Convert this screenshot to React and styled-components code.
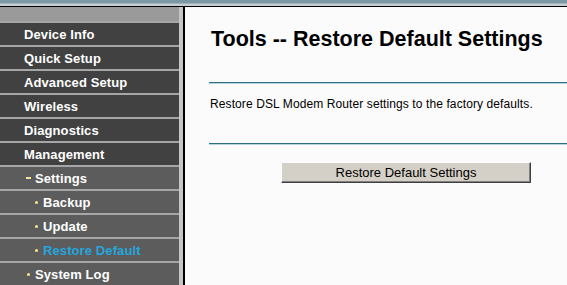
import React from "react";
import styled, { createGlobalStyle } from "styled-components";

const GlobalStyle = createGlobalStyle`
  html, body {
    margin: 0;
    padding: 0;
    background: #fbfbfb;
    overflow: hidden;
  }
`;

const Page = styled.div`
  width: 567px;
  height: 285px;
  display: flex;
  flex-direction: column;
  font-family: "Liberation Sans", Arial, sans-serif;
`;

/* cut-off banner strip at the very top */
const Banner = styled.div`
  height: 4px;
  background: #7c98a4;
  border-bottom: 2px solid #c4cdd1;
  box-shadow: inset 0 -1px 0 #9fb3bb;
`;

const Frame = styled.div`
  flex: 1;
  display: flex;
  border-top: 1px solid #000;
  min-height: 0;
`;

const Sidebar = styled.nav`
  width: 179px;
  flex-shrink: 0;
  display: flex;
  flex-direction: column;
  gap: 2px;
  background: #a6a6a6;
  border-right: 4px solid #c6c6c6;
  overflow: hidden;
`;

const SideHeader = styled.div`
  height: 14px;
  flex-shrink: 0;
  background: #9a9a9a;
`;

const MenuItem = styled.div`
  height: 22px;
  flex-shrink: 0;
  display: flex;
  align-items: center;
  padding-left: ${(p) => p.$indent}px;
  background: ${(p) => (p.$sub ? "#5c5c5c" : "#414141")};
  color: ${(p) => (p.$active ? "#24a6de" : "#ffffff")};
  font-size: 13px;
  font-weight: bold;
  letter-spacing: 0.1px;
  white-space: nowrap;
`;

const Dash = styled.span`
  display: inline-block;
  width: 5px;
  height: 2px;
  background: #f2e69a;
  margin-right: 4px;
`;

const Dot = styled.span`
  display: inline-block;
  width: 3px;
  height: 3px;
  border-radius: 50%;
  background: #f5e88c;
  margin-right: 5px;
`;

const Content = styled.main`
  flex: 1;
  border-left: 2px solid #000;
  background: #fbfbfb;
  padding: 20px 0 0 24px;
`;

const Title = styled.h1`
  margin: 0 0 0 2px;
  font-size: 21.5px;
  font-weight: bold;
  color: #000;
  line-height: 24px;
`;

const Rule = styled.div`
  height: 1px;
  background: #2f6f86;
  box-shadow: 0 1px 0 #b9d2dc;
  margin-top: ${(p) => p.$top}px;
`;

const Note = styled.p`
  margin: 14px 0 0 1px;
  font-size: 12px;
  letter-spacing: 0.1px;
  color: #000;
  line-height: 14px;
`;

const ButtonRow = styled.div`
  margin: 18px 0 0 72px;
`;

const Button = styled.button`
  width: 250px;
  height: 21px;
  padding: 0;
  background: #d4d0c8;
  border: 1px solid;
  border-color: #ffffff #404040 #404040 #ffffff;
  box-shadow: inset -1px -1px 0 #808080;
  font-family: "Liberation Sans", Arial, sans-serif;
  font-size: 13px;
  color: #000;
`;

const menu = [
  { label: "Device Info", indent: 24 },
  { label: "Quick Setup", indent: 24 },
  { label: "Advanced Setup", indent: 24 },
  { label: "Wireless", indent: 24 },
  { label: "Diagnostics", indent: 24 },
  { label: "Management", indent: 24 },
  { label: "Settings", indent: 26, sub: true, mark: "dash" },
  { label: "Backup", indent: 35, sub: true, mark: "dot" },
  { label: "Update", indent: 35, sub: true, mark: "dot" },
  { label: "Restore Default", indent: 35, sub: true, mark: "dot", active: true },
  { label: "System Log", indent: 27, sub: true, mark: "dot" },
];

export default function App() {
  return (
    <>
      <GlobalStyle />
      <Page>
        <Banner />
        <Frame>
          <Sidebar>
            <SideHeader />
            {menu.map((m) => (
              <MenuItem key={m.label} $indent={m.indent} $sub={m.sub} $active={m.active}>
                {m.mark === "dash" && <Dash />}
                {m.mark === "dot" && <Dot />}
                {m.label}
              </MenuItem>
            ))}
          </Sidebar>
          <Content>
            <Title>Tools -- Restore Default Settings</Title>
            <Rule $top={31} />
            <Note>Restore DSL Modem Router settings to the factory defaults.</Note>
            <Rule $top={32} />
            <ButtonRow>
              <Button>Restore Default Settings</Button>
            </ButtonRow>
          </Content>
        </Frame>
      </Page>
    </>
  );
}
